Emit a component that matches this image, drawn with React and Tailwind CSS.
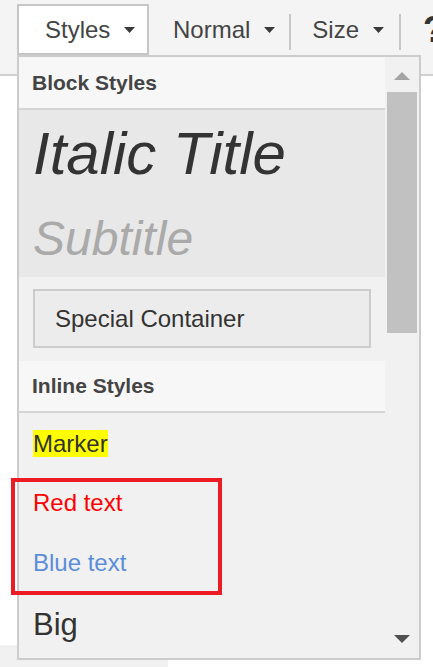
import React from 'react';

function Caret({ className = '' }) {
  return (
    <svg width="11" height="6" viewBox="0 0 11 6" className={`shrink-0 ${className}`}>
      <path d="M0 0 L11 0 L5.5 6 Z" fill="#3a3a3a" />
    </svg>
  );
}

function Toolbar() {
  return (
    <div className="h-[76px] bg-[#f4f4f4] border-b-2 border-[#d0d0d0] flex items-start overflow-hidden">
      <div className="shrink-0 ml-[17px] mt-[4px] w-[132px] h-[51px] bg-white border-2 border-[#c6c6c6] flex items-center pl-[26px] gap-[14px]">
        <span className="text-[24px] leading-none text-[#444]">Styles</span>
        <Caret />
      </div>
      <div className="shrink-0 ml-[24px] mt-[4px] h-[51px] flex items-center gap-[14px]">
        <span className="text-[24px] leading-none text-[#444]">Normal</span>
        <Caret />
      </div>
      <div className="shrink-0 ml-[14px] mt-[14px] w-[2px] h-[36px] bg-[#c8c8c8]" />
      <div className="shrink-0 ml-[21px] mt-[4px] h-[51px] flex items-center gap-[14px]">
        <span className="text-[24px] leading-none text-[#444]">Size</span>
        <Caret />
      </div>
      <div className="shrink-0 ml-[15px] mt-[14px] w-[2px] h-[36px] bg-[#c8c8c8]" />
      <div className="shrink-0 ml-[22px] mt-[4px] h-[51px] flex items-center">
        <span className="text-[36px] leading-none font-bold text-[#333]">?</span>
      </div>
    </div>
  );
}

function Scrollbar() {
  return (
    <div className="w-[34px] bg-[#f1f1f1] flex flex-col items-center">
      <svg width="16" height="8" viewBox="0 0 16 8" className="mt-[15px]">
        <path d="M0 8 L16 8 L8 0 Z" fill="#a3a3a3" />
      </svg>
      <div className="mt-[12px] w-[30px] h-[241px] bg-[#c1c1c1]" />
      <div className="flex-1" />
      <svg width="16" height="8" viewBox="0 0 16 8" className="mb-[15px]">
        <path d="M0 0 L16 0 L8 8 Z" fill="#505050" />
      </svg>
    </div>
  );
}

function StylesMenu() {
  return (
    <div className="absolute left-[17px] top-[55px] w-[404px] h-[605px] border-2 border-[#cccccc] bg-[#f1f1f1] flex">
      <div className="w-[366px] flex flex-col">
        <div className="h-[53px] bg-[#f7f7f7] border-b-2 border-[#d4d4d4] pl-[13px] text-[21px] font-bold leading-[51px] text-[#444]">
          Block Styles
        </div>
        <div className="h-[167px] bg-[#e8e8e8] pl-[14px] pt-[8px]">
          <div className="text-[60px] italic leading-[72px] text-[#333]">Italic Title</div>
          <div className="mt-[19px] text-[48px] italic leading-[60px] text-[#aaaaaa]">Subtitle</div>
        </div>
        <div className="pt-[12px] pb-[13px] px-[14px]">
          <div className="h-[59px] border-2 border-[#cccccc] bg-[#ececec] pl-[20px] flex items-center text-[24px] text-[#333]">
            Special Container
          </div>
        </div>
        <div className="h-[52px] bg-[#f7f7f7] border-b-2 border-[#d4d4d4] pl-[13px] text-[21px] font-bold leading-[50px] text-[#444]">
          Inline Styles
        </div>
        <div className="h-[60px] pl-[14px] flex items-center">
          <span className="bg-[#ffff00] text-[24px] leading-[27px] text-[#333]">Marker</span>
        </div>
        <div className="h-[60px] pl-[14px] flex items-center text-[24px] text-[#ff0000]">Red text</div>
        <div className="h-[60px] pl-[14px] flex items-center text-[24px] text-[#5b8dd9]">Blue text</div>
        <div className="flex-1 pl-[14px] flex items-center text-[31px] text-[#333]">Big</div>
      </div>
      <Scrollbar />
    </div>
  );
}

export default function App() {
  return (
    <div className="relative w-[433px] h-[667px] bg-white overflow-hidden font-['Liberation_Sans',Arial,sans-serif]">
      <Toolbar />
      <div className="h-[569px] bg-white" />
      <div className="h-[22px] w-[168px] bg-[#f1f1f1]" />
      <StylesMenu />
      <div className="absolute left-[11px] top-[478px] w-[211px] h-[117px] border-[4px] border-[#ed1c24]" />
    </div>
  );
}
